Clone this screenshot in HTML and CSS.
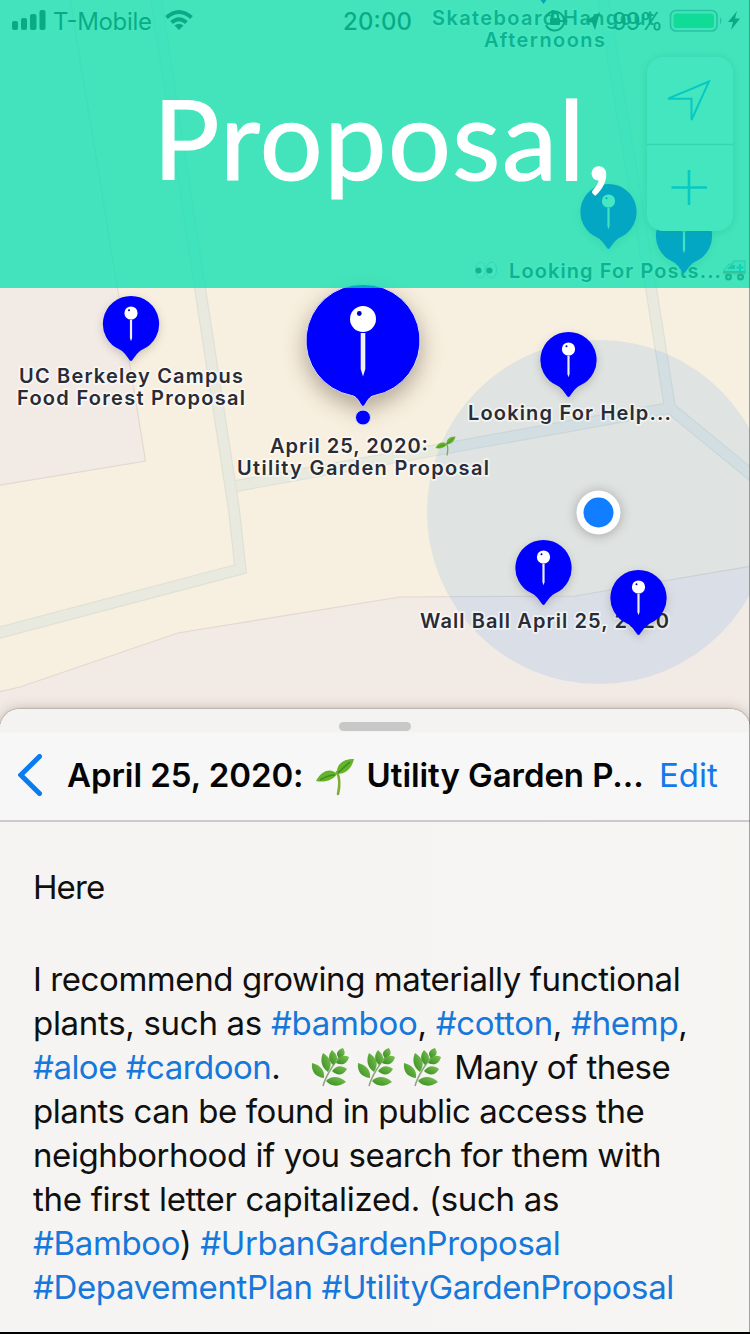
FILE: index.html
```html
<!DOCTYPE html>
<html lang="en">
<head>
<meta charset="utf-8">
<title>Utility Garden Proposal</title>
<link rel="stylesheet" href="styles.css">
</head>
<body>
<svg class="defs" width="0" height="0" aria-hidden="true">
  <defs>
    <g id="pin">
      <path class="pin-body" d="M0-28A28 28 0 0 1 11 25.8C6 28.5 3.5 33.5 1.3 36.2Q0 37.8-1.3 36.2C-3.5 33.5-6 28.5-11 25.8A28 28 0 0 1 0-28Z"/>
      <circle cx="0" cy="-11" r="6.6" fill="#fff"/>
      <circle cx="-2" cy="-13.7" r="1" fill="#00a"/>
      <path d="M-1.1-4.2H1.1V14L0 17.2-1.1 14Z" fill="#ededf5"/>
    </g>
    <linearGradient id="leafFill" x1="0" y1="1" x2="1" y2="0"><stop offset="0" stop-color="#348a22"/><stop offset="1" stop-color="#7fc552"/></linearGradient>
    <symbol id="seedling" viewBox="0 0 40 38">
      <path d="M23 36C25 27 25 20 22 14" fill="none" stroke="#7fae35" stroke-width="2.6" stroke-linecap="round"/>
      <path d="M22 16C21 7 27 1 39 1C37 10 31 16 22 16Z" fill="#63b32b"/>
      <path d="M22 16C17 10 7 11 1 23C10 25 18 22 22 16Z" fill="#63b32b"/>
      <path d="M23 15Q29 9 35 4M20 17Q13 17 5 22" fill="none" stroke="#3f8f1d" stroke-width="1.6"/>
    </symbol>
    <symbol id="herb" viewBox="0 0 38 40">
      <path d="M12 38C15 27 23 16 31 5" fill="none" stroke="#8aa87a" stroke-width="1.5"/>
      <g fill="url(#leafFill)">
        <path d="M13 30C4 29 0 23 1 15C9 17 14 22 13 30Z"/>
        <path d="M17 24C10 19 9 12 12 5C20 10 22 16 17 24Z"/>
        <path d="M22 17C17 12 17 7 21 2C27 7 28 12 22 17Z"/>
        <path d="M28 10C24 6 26 2 32 0C35 5 34 8 28 10Z"/>
        <path d="M25 15C28 8 33 6 38 9C36 16 31 18 25 15Z"/>
        <path d="M21 23C25 17 31 17 36 21C32 28 26 28 21 23Z"/>
        <path d="M15 33C20 27 29 28 35 34C28 39 20 39 15 33Z"/>
      </g>
    </symbol>
  </defs>
</svg>

<main class="screen">
  <section class="map">
    <svg class="map-canvas" viewBox="0 0 750 725" width="750" height="725">
      <rect width="750" height="725" fill="#f7efdf"/>
      <path class="block" d="M-2-2H70L118 291 145.500 461-2 485.500Z"/>
      <path class="block" d="M-2 692L20 687 178 633 400 597 575 596 752 566V730H-2Z"/>
      <g class="road-edge"><path d="M156-2L200 288 234 510 240.500 569-4 633.500M236 486L670 408M603-2L651 288 670 408 754 477"/></g>
      <g class="road-fill"><path d="M156-2L200 288 234 510 240.500 569-4 633.500M236 486L670 408M603-2L651 288 670 408 754 477"/></g>
      <circle cx="599" cy="512" r="172" fill="#3c96f0" fill-opacity=".13"/>

      <g class="label">
        <text x="432" y="24.500" textLength="222">Skateboard Hangout</text>
        <text x="484" y="46.500" textLength="121">Afternoons</text>
        <text x="509" y="277.500" textLength="212">Looking For Posts...</text>
        <text x="19" y="383" textLength="224">UC Berkeley Campus</text>
        <text x="17" y="405" textLength="228">Food Forest Proposal</text>
        <text x="468" y="420" textLength="203">Looking For Help...</text>
        <text x="420" y="628" textLength="249">Wall Ball April 25, 2020</text>
      </g>
      <g>
        <ellipse cx="480.500" cy="270" rx="5" ry="8" fill="#f3f3ee" stroke="#b9b9ae"/>
        <ellipse cx="491.500" cy="270" rx="5" ry="8" fill="#f3f3ee" stroke="#b9b9ae"/>
        <circle cx="478.500" cy="270.500" r="3" fill="#333"/><circle cx="489.500" cy="270.500" r="3" fill="#333"/>
      </g>
      <g>
        <path d="M724 274V270L729 264H733V261H745V274Z" fill="#d8e0e3" stroke="#8b9694"/>
        <path d="M727 269L731 265H735V269Z" fill="#5e8d99"/>
        <path d="M723 272H745" stroke="#b76857" stroke-width="2"/>
        <path d="M740 264V271M736.500 267.500H743.500" stroke="#1ab0e0" stroke-width="2"/>
        <circle cx="728.500" cy="277" r="3.500" fill="#444"/><circle cx="740.500" cy="277" r="3.500" fill="#444"/>
        <circle cx="728.500" cy="277" r="1.300" fill="#ccc"/><circle cx="740.500" cy="277" r="1.300" fill="#ccc"/>
      </g>

      <path d="M539-2H548L543.500 4Z" fill="#00f"/>
      <use href="#pin" x="608.500" y="212"/>
      <use href="#pin" x="684" y="236"/>
      <use href="#pin" x="131" y="324"/>
      <use href="#pin" x="568.500" y="360"/>
      <use href="#pin" x="543.500" y="568"/>
      <use href="#pin" x="638.500" y="598"/>

      <circle class="here" cx="598.500" cy="512.500" r="22" fill="#fff"/>
      <circle cx="598.500" cy="512.500" r="15" fill="#107eff"/>

      <path class="pin-big" d="M363 284.500A56 56 0 0 1 374.500 395.500C369 396.500 367.500 401 364.500 405.500Q363 407.500 361.500 405.500C358.500 401 357 396.500 351.500 395.500A56 56 0 0 1 363 284.500Z"/>
      <circle cx="363" cy="417.500" r="7.500" fill="#00f" stroke="#dcdcf8" stroke-width="1"/>
      <circle cx="363" cy="319" r="13" fill="#fff"/>
      <circle cx="359.300" cy="313.500" r="2.400" fill="#00b"/>
      <path d="M360.700 333H365.300V369L363 376.500 360.700 369Z" fill="#f0f0f6"/>
      <g class="label">
        <text x="270" y="453" textLength="158">April 25, 2020:</text>
        <text x="237" y="475" textLength="252">Utility Garden Proposal</text>
      </g>
      <use href="#seedling" x="434" y="436" width="23" height="20"/>

      <rect class="control" x="647" y="57" width="86" height="174" rx="16"/>
      <path d="M647 144.500H733" stroke="#b9b9b9" stroke-width="1.600"/>
      <path d="M668 98.700L709 81.500 691.500 120V98.700Z" fill="none" stroke="#0a84ff" stroke-width="2"/>
      <path d="M671.500 187.500H707M689 170V205" stroke="#0a84ff" stroke-width="2.600"/>

      <g fill="#111">
        <rect x="12" y="21" width="6" height="9" rx="2"/><rect x="21" y="18" width="6" height="12" rx="2"/><rect x="30" y="14" width="6.500" height="16" rx="2"/><rect x="39.500" y="10" width="6" height="20" rx="2"/>
      </g>
      <g fill="none" stroke="#111" stroke-width="4">
        <path d="M166.500 17.500Q179 6.500 191.500 17.500M171.500 22.500Q179 16 186.500 22.500"/>
      </g>
      <path d="M179 30L174.500 25.500Q179 22 183.500 25.500Z" fill="#111"/>
      <g class="status-text">
        <text x="53" y="29.500" textLength="99">T-Mobile</text>
        <text x="343" y="29.500" textLength="69" font-weight="500">20:00</text>
        <text x="612" y="29.500" textLength="51">99%</text>
      </g>
      <g fill="none" stroke="#111" stroke-width="2">
        <path d="M546 17A9.500 9.500 0 1 1 546 25M563 16L566 21 560 21"/>
        <path d="M552 18V16A3 3 0 0 1 558 16V18"/>
      </g>
      <rect x="550" y="18" width="10" height="7" rx="1" fill="#111"/>
      <path d="M585 21.500L600 12 595 30 592 22.500Z" fill="#111"/>
      <rect x="670.500" y="10.500" width="46.500" height="20.500" rx="5.500" fill="none" stroke="#777" stroke-width="1.600"/>
      <rect x="673.500" y="13.500" width="40.500" height="14.500" rx="3" fill="#31d158"/>
      <path d="M720 17Q723 20.500 720 24.500Z" fill="#777"/>
      <path d="M737 11L728 22H733L731 30 740 18.500H735Z" fill="#111"/>
    </svg>
    <header class="banner">Proposal,</header>
  </section>

  <article class="sheet">
    <header class="sheet-head">
      <span class="grabber"></span>
      <div class="title-bar">
        <svg class="back" viewBox="0 0 24 42" width="24" height="42"><path d="M21.500 2.500L2.800 21 21.500 39.500" fill="none" stroke="#087cf0" stroke-width="5" stroke-linecap="round" stroke-linejoin="miter"/></svg>
        <h1 class="title"><span class="t-date">April 25, 2020:</span><svg class="sprout" width="40" height="38"><use href="#seedling"/></svg><span class="t-name">Utility Garden P...</span></h1>
        <a class="edit">Edit</a>
      </div>
    </header>
    <div class="body">
      <p class="line l1">Here</p>
      <p class="line gap"></p>
      <p class="line l2">I recommend growing materially functional</p>
      <p class="line l3">plants, such as <a>#bamboo</a>, <a>#cotton</a>, <a>#hemp</a>,</p>
      <p class="line l4"><span><a>#aloe</a> <a>#cardoon</a>.</span><span class="herbs"><svg width="38" height="40"><use href="#herb"/></svg><svg width="38" height="40"><use href="#herb"/></svg><svg width="38" height="40"><use href="#herb"/></svg></span><span>Many of these</span></p>
      <p class="line l5">plants can be found in public access the</p>
      <p class="line l6">neighborhood if you search for them with</p>
      <p class="line l7">the first letter capitalized. (such as</p>
      <p class="line l8"><a>#Bamboo</a>) <a>#UrbanGardenProposal</a></p>
      <p class="line l9"><a>#DepavementPlan</a> <a>#UtilityGardenProposal</a></p>
    </div>
  </article>
</main>
</body>
</html>
```
FILE: styles.css
```css
* { box-sizing: border-box; }
body { margin: 0; font-family: Inter, "Liberation Sans", sans-serif; }
.defs { position: absolute; }
.screen {
  position: relative;
  width: 750px;
  height: 1334px;
  overflow: hidden;
  display: flex;
  flex-direction: column;
  background: #f1eae6;
  border-bottom: 2px solid #000;
}
.screen::after {
  content: "";
  position: absolute;
  inset: 0 0 0 auto;
  width: 1px;
  background: rgba(90, 90, 90, .55);
}
.map { position: relative; height: 709px; flex: none; }
.map-canvas { display: block; }
.block { fill: #f2eae5; stroke: #e2d9d0; stroke-width: 1.2; }
.road-edge path { fill: none; stroke: #dfe1d5; stroke-width: 12; }
.road-fill path { fill: none; stroke: #e9eadf; stroke-width: 9.6; }
.pin-body { fill: #00f; filter: drop-shadow(0 3px 4px rgba(60, 50, 30, .22)); }
.pin-big { fill: #00f; stroke: #dcdcf8; stroke-width: 1; filter: drop-shadow(0 8px 11px rgba(70, 50, 30, .4)); }
.here { filter: drop-shadow(0 1px 6px rgba(0, 0, 0, .28)); }
.label {
  font-size: 20px;
  font-weight: 600;
  fill: #2a2c35;
  stroke: rgba(255, 255, 255, .6);
  stroke-width: 3.5px;
  stroke-linejoin: round;
  paint-order: stroke;
}
.status-text { font-size: 24px; fill: #111; }
.control { fill: #faf8f4; filter: drop-shadow(0 1px 4px rgba(0, 0, 0, .3)); }
.banner {
  position: absolute;
  inset: 0 0 auto 0;
  height: 288px;
  padding: 70px 0 0 153px;
  background: rgba(6, 224, 174, .745);
  color: #fff;
  font: 400 111px/134px Lato, sans-serif;
  letter-spacing: 1.5px;
  -webkit-text-stroke: 1.2px #fff;
  white-space: nowrap;
}
.sheet {
  position: relative;
  flex: 1;
  border-radius: 20px 20px 0 0;
  background: linear-gradient(90deg, #f5f4f2, #f7f5f2);
  box-shadow: 0 0 2px rgba(0, 0, 0, .5), 0 0 13px rgba(80, 60, 50, .3);
}
.sheet-head {
  height: 112.500px;
  padding-top: 13px;
  display: flex;
  flex-direction: column;
  align-items: center;
  background: linear-gradient(#f4f3f1 0 23px, #f7f7f7 24px);
  border-radius: 20px 20px 0 0;
  border-bottom: 2px solid #cbcbcf;
}
.grabber { width: 72px; height: 9px; flex: none; border-radius: 5px; background: #c8c8c8; }
.title-bar { align-self: stretch; display: flex; align-items: center; height: 92px; padding-left: 18px; }
.back { flex: none; margin-right: 25px; }
.title { margin: 0; display: flex; align-items: center; width: 592px; font-size: 33px; font-weight: 600; letter-spacing: -.06px; white-space: nowrap; color: #050505; }
.sprout { margin: 3px 12px 0 11px; flex: none; }
.edit { color: #1479ea; font-size: 33px; }
.body { padding: 43px 33px 0; font-size: 33px; line-height: 44px; color: #101010; }
.line { margin: 0; height: 44px; white-space: nowrap; letter-spacing: -.42px; }
.line.gap { height: 48px; }
.line a { color: #1678db; }
.line.l1 { letter-spacing: -.9px; }
.line.l3, .line.l7 { letter-spacing: -.3px; }
.line.l4 { display: flex; letter-spacing: -.52px; }
.line.l8, .line.l9 { letter-spacing: -.38px; }
.herbs { display: flex; gap: 8px; margin: 3px 13px 0 31px; }
```
